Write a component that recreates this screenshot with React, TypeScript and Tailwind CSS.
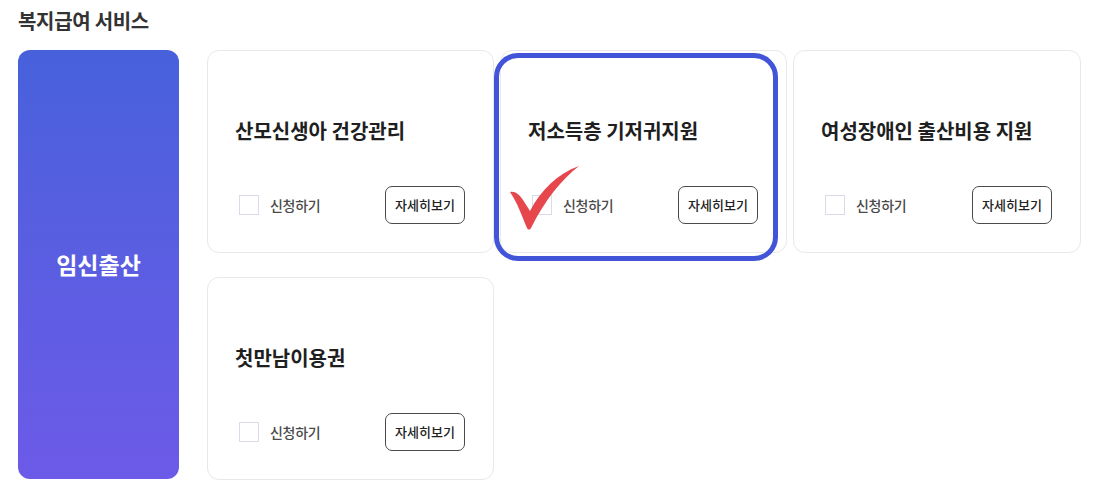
const services = [
  { title: "산모신생아 건강관리", marked: false },
  { title: "저소득층 기저귀지원", marked: true },
  { title: "여성장애인 출산비용 지원", marked: false },
  { title: "첫만남이용권", marked: false },
];

const CheckMark = () => (
  <svg
    className="absolute left-[8px] top-[115px]"
    width="72"
    height="66"
    viewBox="0 0 72 66"
  >
    <path
      d="M1 26 C6 25 10 28 14 34 L21 45 C32 24 48 8 70 0 C52 14 36 34 22 62 C21 64 19 64 18 62 C13 50 8 36 1 26 Z"
      fill="#e5474d"
    />
  </svg>
);

const ServiceCard = ({ title, marked }: { title: string; marked: boolean }) => {
  return (
    <div className="relative h-[203px] rounded-[12px] border border-[#e8e8ea] bg-white px-[27px] pt-[67px]">
      <p className="text-[20px] font-bold leading-[26px] text-[#1f1f1f]">
        {title}
      </p>
      <div className="mt-[42px] flex items-center justify-between pr-[1px]">
        <div className="flex items-center gap-[11px] pl-[4px]">
          <span className="h-[20px] w-[20px] border border-[#d9dce8] bg-white" />
          <span className="text-[14px] font-medium tracking-[-0.3px] text-[#4a4a4a]">
            신청하기
          </span>
        </div>
        <button className="h-[38px] w-[80px] rounded-[7px] border-[1.5px] border-[#4a4a4a] bg-white text-[13px] font-medium text-[#222]">
          자세히보기
        </button>
      </div>
      {marked && (
        <>
          <div className="pointer-events-none absolute left-[-7px] top-[2px] h-[208px] w-[284px] rounded-[24px] border-[5px] border-[#4254d8]" />
          <CheckMark />
        </>
      )}
    </div>
  );
};

export default function App() {
  return (
    <div
      className="h-[493px] w-[1095px] overflow-hidden bg-white pl-[18px] pt-[8px]"
      style={{ fontFamily: '"Noto Sans CJK KR", "Noto Sans", sans-serif' }}
    >
      <h2 className="text-[20px] font-semibold leading-[26px] tracking-[-0.3px] text-[#333]">
        복지급여 서비스
      </h2>
      <div className="mt-[16px] flex gap-[28px]">
        <div className="flex h-[429px] w-[161px] shrink-0 items-center justify-center rounded-[12px] bg-gradient-to-b from-[#4761db] to-[#6c5ae8]">
          <span className="text-[23px] font-bold text-white">임신출산</span>
        </div>
        <div className="grid shrink-0 grid-cols-[287px_287px_288px] content-start gap-x-[6px] gap-y-[24px]">
          {services.map((s) => (
            <ServiceCard key={s.title} title={s.title} marked={s.marked} />
          ))}
        </div>
      </div>
    </div>
  );
}
